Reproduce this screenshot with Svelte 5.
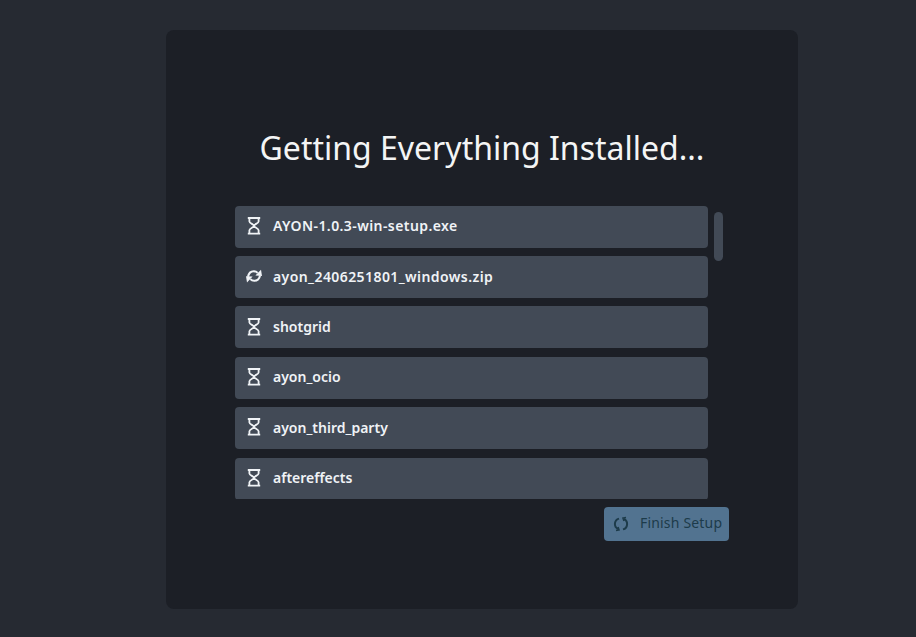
<script>
  let files = [
    { name: "AYON-1.0.3-win-setup.exe", status: "pending", digits: true },
    { name: "ayon_2406251801_windows.zip", status: "active", digits: true },
    { name: "shotgrid", status: "pending" },
    { name: "ayon_ocio", status: "pending" },
    { name: "ayon_third_party", status: "pending" },
    { name: "aftereffects", status: "pending" },
  ];
</script>

<main class="page">
  <section class="panel">
    <h1>Getting Everything Installed...</h1>
    <div class="body">
      <div class="list">
        {#each files as file}
          <div class="row">
            {#if file.status == "pending"}
              <svg class="icon" viewBox="0 0 16 20" width="16" height="20" fill="none" stroke="currentColor" stroke-width="1.8">
                <path d="M1.8 2h12.4M1.8 17.6h12.4" />
                <path d="M3.4 2v3.4c0 1.9 4.6 2.9 4.6 4.4s-4.6 2.5-4.6 4.4v3.4M12.6 2v3.4c0 1.9-4.6 2.9-4.6 4.4s4.6 2.5 4.6 4.4v3.4" />
              </svg>
            {:else}
              <svg class="icon" viewBox="0 0 16 16" width="16" height="16" fill="none" stroke="currentColor" stroke-width="2.1">
                <path d="M2 8.8C2.6 5.6 4.8 3.2 7.8 3.2c1.6 0 2.8.6 3.8 1.7" />
                <path d="M14 7.6c-.6 3.2-2.8 5.2-5.8 5.2-1.6 0-2.8-.6-3.8-1.7" />
                <path d="M9.4 7.6l6.6.3-1-6.2zM6.6 8.6L0 8.3l1 6.2z" fill="currentColor" stroke="none" />
              </svg>
            {/if}
            <span class:digits={file.digits}>{file.name}</span>
          </div>
        {/each}
      </div>
      <div class="thumb"></div>
    </div>
    <div class="actions">
      <button disabled>
        <svg viewBox="0 0 18 18" width="18" height="18" fill="none" stroke="currentColor" stroke-width="2">
          <path d="M7 3.6A5.6 5.6 0 0 0 6 14" />
          <path d="M11 14.4A5.6 5.6 0 0 0 12 4" />
          <path d="M4 15.5l3-.6-1-3M14 2.5l-3 .6 1 3" stroke-width="1.6" />
        </svg>
        <span>Finish Setup</span>
      </button>
    </div>
  </section>
</main>

<style>
  :global(body) {
    background: #262a32;
  }

  .page {
    height: 637px;
    padding-top: 30px;
    box-sizing: border-box;
    font-family: "Noto Sans", sans-serif;
  }

  .panel {
    width: 632px;
    height: 579px;
    margin-left: 166px;
    padding: 96px 69px 0;
    box-sizing: border-box;
    background: #1c1f26;
    border-radius: 8px;
  }

  h1 {
    margin: 0 0 35.6px;
    height: 44px;
    line-height: 44px;
    font-size: 32px;
    font-weight: 400;
    color: #f4f5f5;
    text-align: center;
  }

  .body {
    position: relative;
    height: 293.4px;
    overflow: hidden;
  }

  .list {
    display: flex;
    flex-direction: column;
    gap: 8.4px;
    width: 473px;
  }

  .row {
    display: flex;
    align-items: center;
    gap: 11px;
    height: 42px;
    padding: 0 0 1.6px 11px;
    box-sizing: border-box;
    flex-shrink: 0;
    background: #424a56;
    border-radius: 4px;
    color: #f0f3f6;
    font-size: 14px;
    font-weight: 600;
  }

  .digits {
    letter-spacing: 0.42px;
  }

  .icon {
    flex-shrink: 0;
  }

  .thumb {
    position: absolute;
    left: 479px;
    top: 6px;
    width: 9px;
    height: 49px;
    border-radius: 5px;
    background: #424a56;
  }

  .actions {
    display: flex;
    justify-content: flex-end;
    margin-top: 7.6px;
    width: 494px;
  }

  button {
    display: flex;
    align-items: center;
    gap: 10px;
    width: 125px;
    height: 34px;
    padding: 0 0 3px 8px;
    box-sizing: border-box;
    border: none;
    border-radius: 4px;
    background: #527390;
    color: #1d3b4a;
    font-family: inherit;
    font-size: 14px;
    letter-spacing: 0.18px;
  }

  button svg {
    margin-top: 3px;
  }
</style>
